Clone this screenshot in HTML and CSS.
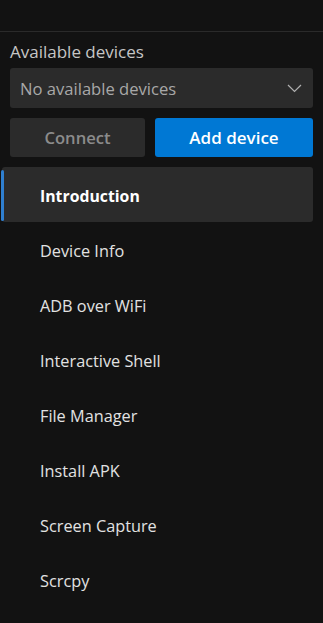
FILE: index.html
```html
<!DOCTYPE html>
<html>
<head>
<meta charset="utf-8">
<link rel="stylesheet" href="styles.css">
</head>
<body>
<div class="pane">
  <div class="topbar"></div>
  <div class="devices">
    <div class="label">Available devices</div>
    <div class="select">
      <span>No available devices</span>
      <svg class="chev" width="15" height="9" viewBox="0 0 15 9"><path d="M1 1 L7.5 7.5 L14 1" fill="none" stroke="#b0b0b0" stroke-width="1.2"/></svg>
    </div>
    <div class="buttons">
      <div class="btn connect">Connect</div>
      <div class="btn add">Add device</div>
    </div>
  </div>
  <nav class="menu">
    <div class="item active"><span class="accent"></span>Introduction</div>
    <div class="item">Device Info</div>
    <div class="item">ADB over WiFi</div>
    <div class="item">Interactive Shell</div>
    <div class="item">File Manager</div>
    <div class="item">Install APK</div>
    <div class="item">Screen Capture</div>
    <div class="item">Scrcpy</div>
  </nav>
</div>
</body>
</html>
```

FILE: styles.css
```css
html, body {
  margin: 0;
  padding: 0;
  background: #121212;
}
body {
  font-family: "Open Sans", "Noto Sans", sans-serif;
  width: 323px;
  height: 623px;
  overflow: hidden;
}
.pane {
  display: flex;
  flex-direction: column;
}
.topbar {
  height: 31px;
  border-bottom: 1px solid #2a2a2a;
}
.devices {
  padding: 9px 10px 0 10px;
  display: flex;
  flex-direction: column;
}
.label {
  color: #c6c6c6;
  font-size: 17px;
  line-height: 21px;
  height: 27px;
  font-weight: 500;
}
.select {
  height: 40px;
  background: #2b2b2b;
  border-radius: 3px;
  display: flex;
  align-items: center;
  justify-content: space-between;
  padding: 0 11px 0 10px;
  color: #a8a8a8;
  font-size: 16.6px;
}
.chev {
  display: block;
}
.buttons {
  margin-top: 10px;
  display: grid;
  grid-template-columns: 135px 1fr;
  gap: 10px;
}
.btn {
  height: 39px;
  border-radius: 3px;
  display: flex;
  align-items: center;
  justify-content: center;
  font-size: 16.6px;
  font-weight: 600;
}
.connect {
  background: #2b2b2b;
  color: #8c8c8c;
}
.add {
  background: #0078d4;
  color: #ffffff;
  font-size: 17px;
}
.menu {
  margin-top: 10px;
  padding: 0 10px 0 2px;
  display: flex;
  flex-direction: column;
}
.item {
  position: relative;
  height: 55px;
  box-sizing: border-box;
  padding-top: 2px;
  display: flex;
  align-items: center;
  padding-left: 38px;
  color: #e2e2e2;
  font-size: 16.3px;
}
.item.active {
  background: #2b2b2b;
  border-radius: 3px;
  color: #ffffff;
  font-weight: 700;
  font-size: 15.8px;
}
.accent {
  position: absolute;
  left: -1px;
  top: 3px;
  bottom: 1px;
  width: 3px;
  border-radius: 2px;
  background: #2f7fd0;
}
```
